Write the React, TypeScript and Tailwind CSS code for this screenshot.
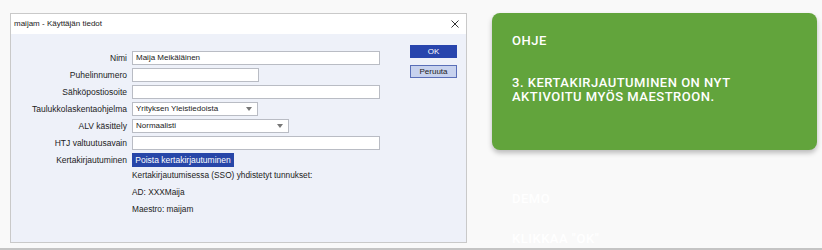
import React from 'react';

const FORM_ROWS = [
  { label: 'Nimi', kind: 'input', width: 'w-[248px]', value: 'Maija Meikäläinen' },
  { label: 'Puhelinnumero', kind: 'input', width: 'w-[127px]', value: '' },
  { label: 'Sähköpostiosoite', kind: 'input', width: 'w-[248px]', value: '' },
  { label: 'Taulukkolaskentaohjelma', kind: 'select', width: 'w-[126px]', value: 'Yrityksen Yleistiedoista' },
  { label: 'ALV käsittely', kind: 'select', width: 'w-[157px]', value: 'Normaalisti' },
  { label: 'HTJ valtuutusavain', kind: 'input', width: 'w-[248px]', value: '' },
];

function Field({ kind, width, value }: { kind: string; width: string; value: string }) {
  return (
    <div
      className={`${width} h-[14px] bg-white border border-[#b9bcc4] flex items-center justify-between pl-[3px] pr-[5px] text-[8px] text-[#222]`}
    >
      <span>{value}</span>
      {kind === 'select' && (
        <svg width="6" height="4" viewBox="0 0 6 4" className="text-[#777]">
          <path d="M0 0h6L3 4z" fill="currentColor" />
        </svg>
      )}
    </div>
  );
}

function Dialog() {
  return (
    <div className="w-[457px] h-[230px] border border-[#c9c9c9] bg-[#eef1f9] flex flex-col font-['Liberation_Sans',Arial,sans-serif] text-[#222]">
      {/* title bar */}
      <div className="h-[20px] bg-white flex items-center justify-between pl-[3px] pr-[7px] text-[8px]">
        <span>maijam - Käyttäjän tiedot</span>
        <svg width="8" height="8" viewBox="0 0 8 8" className="text-[#333]">
          <path d="M0.5 0.5l7 7M7.5 0.5l-7 7" stroke="currentColor" strokeWidth="1" />
        </svg>
      </div>

      <div className="flex pt-[11px]">
        <div className="flex flex-col">
          <div className="flex flex-col gap-[3px] pt-[6px]">
            {FORM_ROWS.map((row) => (
              <div key={row.label} className="flex items-center">
                <span className="w-[121px] text-right pr-[5px] text-[8.5px]">{row.label}</span>
                <Field kind={row.kind} width={row.width} value={row.value} />
              </div>
            ))}
            <div className="flex items-center">
              <span className="w-[121px] text-right pr-[5px] text-[8.5px]">Kertakirjautuminen</span>
              <button className="h-[14px] w-[102px] bg-[#2746a8] text-white text-[8.5px] flex items-center justify-center whitespace-nowrap">
                Poista kertakirjautuminen
              </button>
            </div>
          </div>
          <div className="pl-[121px] pt-[3px] flex flex-col gap-[6px] text-[8.3px] leading-[11px]">
            <span>Kertakirjautumisessa (SSO) yhdistetyt tunnukset:</span>
            <span>AD: XXXMaija</span>
            <span>Maestro: maijam</span>
          </div>
        </div>

        <div className="ml-[30px] flex flex-col gap-[7px]">
          <button className="w-[47px] h-[13px] bg-[#2845ad] text-white text-[8px] flex items-center justify-center">
            OK
          </button>
          <button className="w-[47px] h-[13px] bg-[#c7d2ee] border border-[#5a6fb8] text-[#222] text-[8px] flex items-center justify-center">
            Peruuta
          </button>
        </div>
      </div>
    </div>
  );
}

export default function App() {
  return (
    <div className="w-[822px] h-[250px] bg-[#f9f9f9] border-b-2 border-[#c4c4c4] flex pt-[13px] pl-[10px] font-['Roboto',sans-serif]">
      <Dialog />
      <div className="ml-[25px] flex flex-col">
        <div className="w-[325px] h-[142px] rounded-[8px] bg-[#62a43c] shadow-[0_3px_5px_rgba(0,0,0,0.25)] px-[20px] pt-[21px] text-white font-medium text-[13px] tracking-[0.5px] leading-[14px]">
          <p>OHJE</p>
          <p className="mt-[28px]">
            3. KERTAKIRJAUTUMINEN ON NYT
            <br />
            AKTIVOITU MYÖS MAESTROON.
          </p>
        </div>
        <div className="pl-[20px] pt-[39px] text-white font-medium text-[13px] tracking-[0.5px] flex flex-col gap-[20px]">
          <span>DEMO</span>
          <span>KLIKKAA "OK"</span>
        </div>
      </div>
    </div>
  );
}
